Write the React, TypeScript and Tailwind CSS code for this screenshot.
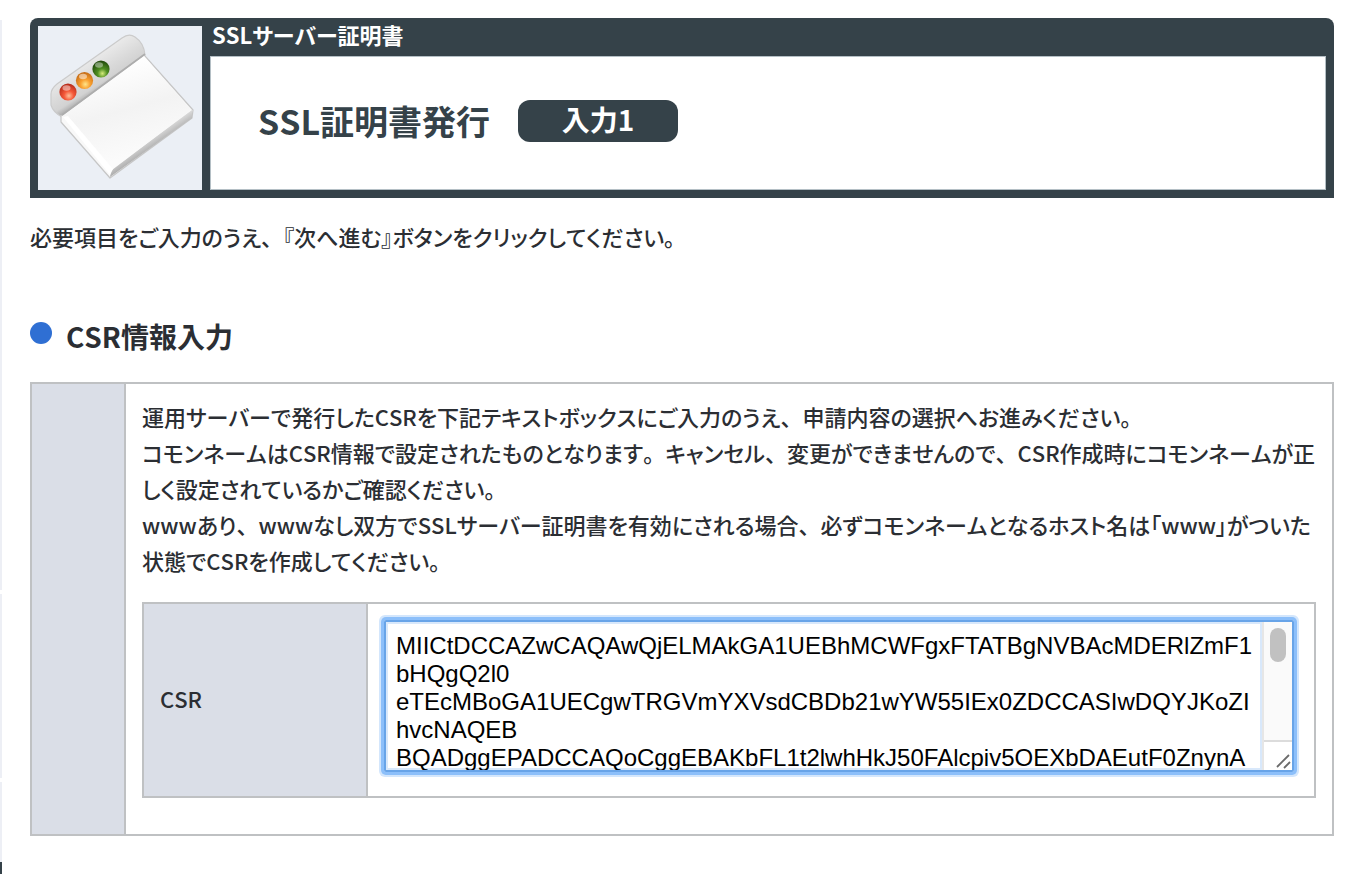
import React, { useState } from 'react'

const csrText = `MIICtDCCAZwCAQAwQjELMAkGA1UEBhMCWFgxFTATBgNVBAcMDERlZmF1bHQgQ2l0
eTEcMBoGA1UECgwTRGVmYXVsdCBDb21wYW55IEx0ZDCCASIwDQYJKoZIhvcNAQEB
BQADggEPADCCAQoCggEBAKbFL1t2lwhHkJ50FAlcpiv5OEXbDAEutF0ZnynAq7Ws
k3VJxR0pYt8mHc2LwQzN5uBfGe1sOaDi9KjXhTyU6rMvCbPqZl4EwSgAnFoIdx7J
R2tVbYkMuQ8hWc0pLzNs3GfXeaTiOj5yUrKmDvCqBl6PwEgSnZoAdFxIJ7tHR1Vb
YkQ9uMhWc4pLzKs2GfNeaXiTj8yOrUmDqCvBw6PlEgZnSoFdAxJI5tRH3VkbYQu0
MhcWp7LzGsK1fNaeTiXj4yrOmUqDCvwBPl9EZgSnFoAdJxRIt6HVbk2YQuMhWc8p
AgMBAAGgLTArBgkqhkiG9w0BCQ4xHjAcMBoGA1UdEQQTMBGCD3d3dy5leGFtcGxl`

const intro = '必要項目をご入力のうえ、『次へ進む』ボタンをクリックしてください。'

const description = [
    '運用サーバーで発行したCSRを下記テキストボックスにご入力のうえ、申請内容の選択へお進みください。',
    'コモンネームはCSR情報で設定されたものとなります。キャンセル、変更ができませんので、CSR作成時にコモンネームが正',
    'しく設定されているかご確認ください。',
    'wwwあり、wwwなし双方でSSLサーバー証明書を有効にされる場合、必ずコモンネームとなるホスト名は「www」がついた',
    '状態でCSRを作成してください。',
]

// kana are set proportionally, but the punctuation keeps its full width
const JaText = ({ text }: { text: string }) => (
    <>
        {text.split(/([、。])/).map((part,index)=>(
            part === '、' || part === '。'
                ? <span key={index} className="[font-feature-settings:normal]">{part}</span>
                : part
        ))}
    </>
)

const AppIcon = () => (
    <svg viewBox="0 0 164 164" className="block h-[164px] w-[164px]" aria-hidden="true">
        <defs>
            <linearGradient id="bar" x1="52" y1="30" x2="70" y2="58" gradientUnits="userSpaceOnUse">
                <stop offset="0" stopColor="#ececec" />
                <stop offset="0.6" stopColor="#d9d9d9" />
                <stop offset="0.85" stopColor="#d2d2d2" />
                <stop offset="1" stopColor="#b4b4b4" />
            </linearGradient>
            <linearGradient id="sheet" x1="70" y1="40" x2="95" y2="130" gradientUnits="userSpaceOnUse">
                <stop offset="0" stopColor="#ffffff" />
                <stop offset="0.5" stopColor="#f3f3f3" />
                <stop offset="1" stopColor="#fbfbfb" />
            </linearGradient>
            <linearGradient id="edge" x1="110" y1="114" x2="116" y2="123" gradientUnits="userSpaceOnUse">
                <stop offset="0" stopColor="#d8d8d8" />
                <stop offset="1" stopColor="#a8a8a8" />
            </linearGradient>
            <radialGradient id="red" cx="0.55" cy="0.72" r="0.7">
                <stop offset="0" stopColor="#ffc09a" />
                <stop offset="0.4" stopColor="#f5593a" />
                <stop offset="1" stopColor="#b52a18" />
            </radialGradient>
            <radialGradient id="orange" cx="0.55" cy="0.72" r="0.7">
                <stop offset="0" stopColor="#ffe58a" />
                <stop offset="0.4" stopColor="#f9a02f" />
                <stop offset="1" stopColor="#c46a14" />
            </radialGradient>
            <radialGradient id="green" cx="0.58" cy="0.76" r="0.7">
                <stop offset="0" stopColor="#d6ec7c" />
                <stop offset="0.4" stopColor="#4f8f22" />
                <stop offset="1" stopColor="#234d0c" />
            </radialGradient>
        </defs>
        <path d="M13 79L13 68Q13 63 19 58L84 12Q91 7 97 11Q106 17 107 29L24 91Q15 86 13 79Z" fill="url(#bar)" stroke="#cbcbcb" strokeWidth="1.2" />
        <path d="M23 90L106 29L155 84L154 92L72 152L23 96Z" fill="#f8f8f8" stroke="#c6c6c6" strokeWidth="1.2" strokeLinejoin="round" />
        <path d="M154 84L154 92L72 151L73 144Z" fill="url(#edge)" />
        <path d="M25 90L106 30L153 84L74 144Z" fill="url(#sheet)" />
        <path d="M25 91L30 90L75 143L72 149Z" fill="#ffffff" />
        <path d="M24 89L107 28" stroke="#adadad" strokeWidth="1.6" />
        <circle cx="30" cy="66" r="8.6" fill="url(#red)" />
        <circle cx="46.5" cy="54.5" r="8.6" fill="url(#orange)" />
        <circle cx="63" cy="43" r="8.6" fill="url(#green)" />
        <ellipse cx="28.5" cy="62" rx="4" ry="2.8" fill="#fff" opacity="0.45" />
        <ellipse cx="45" cy="50.5" rx="4" ry="2.8" fill="#fff" opacity="0.5" />
        <ellipse cx="61" cy="39" rx="4" ry="2.8" fill="#fff" opacity="0.4" />
    </svg>
)

const PageHeader = () => (
    <header className="flex gap-2 rounded-t-lg bg-[#354249] p-2">
        <div className="shrink-0 bg-[#ebeff5]">
            <AppIcon />
        </div>
        <div className="flex grow flex-col">
            <p className="h-[30px] px-[2px] text-[22px] leading-4 font-bold text-white">SSLサーバー証明書</p>
            <div className="flex grow items-center gap-7 border border-[#b4bfc5] bg-white px-[47px] pb-1">
                <h1 className="text-[34px] leading-10 font-bold text-[#354249]">SSL証明書発行</h1>
                <span className="w-40 rounded-xl bg-[#354249] pb-1 text-center text-[28px] leading-[38px] font-bold text-white">入力1</span>
            </div>
        </div>
    </header>
)

const App = () => {

    const [csr,setCsr] = useState(csrText)

    return (
        <div className="flex bg-white font-['Noto_Sans_CJK_JP',sans-serif] text-[#2b2e33] [font-feature-settings:'palt'] [font-kerning:none]">
            {/* edge of the side menu */}
            <aside className="flex w-[2px] shrink-0 flex-col gap-1 pt-5">
                <div className="h-[570px] bg-[#edeff5]"></div>
                <div className="h-[184px] bg-[#edeff5]"></div>
                <div className="bg-[#edeff5] pt-20">
                    <div className="h-3 bg-[#354249]"></div>
                </div>
            </aside>

            <main className="grow pt-[18px] pr-[38px] pl-7">
                <PageHeader />

                <p className="mt-5 text-[22px] leading-9 font-medium"><JaText text={intro} /></p>

                <h2 className="mt-16 flex items-start gap-[14px] text-[28px] leading-9 font-bold">
                    <span className="mt-1 h-[22px] w-[22px] rounded-full bg-[#2f6fd3]"></span>
                    CSR情報入力
                </h2>

                <section className="mt-7 flex border-2 border-[#bfc1c3]">
                    <div className="w-[94px] shrink-0 border-r-2 border-[#bfc1c3] bg-[#dadee7]"></div>
                    <div className="min-w-0 grow px-4 pt-[14px] pb-9">
                        <div className="-mr-2 text-[22px] leading-9 font-medium">
                            {description.map((line,index)=>(
                                <p key={index}><JaText text={line} /></p>
                            ))}
                        </div>

                        <table className="mt-6 w-full border-collapse">
                            <tbody>
                                <tr>
                                    <th className="w-56 border-2 border-[#bfc1c3] bg-[#dadee7] px-4 pb-1 text-left text-[22px] font-medium">
                                        <label htmlFor="csr">CSR</label>
                                    </th>
                                    <td className="border-2 border-[#bfc1c3] pt-4 pr-5 pb-6 pl-4">
                                        <div className="flex h-[152px] rounded-xs border-2 border-[#68a4e8] shadow-[0_0_0_3px_#8cbffa,0_0_0_5px_#d3e6fc]">
                                            <textarea
                                                id="csr"
                                                value={csr}
                                                onChange={(e)=>setCsr(e.target.value)}
                                                spellCheck={false}
                                                className="block min-w-0 grow resize-none bg-white pt-[10px] pr-2 pl-[10px] font-['Liberation_Sans',Arial,sans-serif] text-2xl leading-7 text-black shadow-[inset_0_0_0_2px_#d8e8fb] outline-none [font-feature-settings:normal] [font-kerning:auto] [scrollbar-width:none]"
                                            />
                                            {/* scroll track and resize corner */}
                                            <div className="flex w-[30px] shrink-0 flex-col border-l-2 border-[#e6e6e6]">
                                                <div className="flex grow justify-center border-b-2 border-[#dcdcdc] bg-[#fafafa] pt-[6px]">
                                                    <div className="h-[34px] w-4 rounded-full bg-[#c1c1c1]"></div>
                                                </div>
                                                <div className="flex h-7 items-end justify-end bg-white">
                                                    <svg viewBox="0 0 16 16" className="h-4 w-4" stroke="#6b6b6b" strokeWidth="1.8" aria-hidden="true">
                                                        <path d="M1 13L13 1M8 14L14 8" />
                                                    </svg>
                                                </div>
                                            </div>
                                        </div>
                                    </td>
                                </tr>
                            </tbody>
                        </table>
                    </div>
                </section>
            </main>
        </div>
    )
}

export default App
